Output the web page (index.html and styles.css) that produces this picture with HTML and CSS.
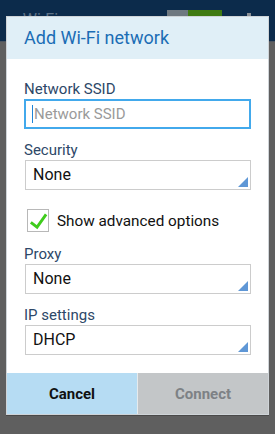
FILE: index.html
```html
<!DOCTYPE html>
<html lang="en">
<head>
  <meta charset="UTF-8" />
  <meta name="viewport" content="width=device-width, initial-scale=1.0"/>
  <title>Add Wi-Fi network</title>
  <link rel="stylesheet" href="styles.css">
</head>
<body>
  <header class="action-bar">
    <span class="bar-title">&lsaquo; Wi-Fi</span>
    <span class="bar-switch"><span class="bar-switch-on"></span></span>
    <span class="bar-menu"></span>
  </header>

  <div class="dialog">
    <h2 class="dialog-title">Add Wi-Fi network</h2>

    <form class="dialog-body">
      <label class="field-label" for="ssid">Network SSID</label>
      <div class="text-field">
        <span class="caret"></span>
        <input type="text" id="ssid" placeholder="Network SSID" />
      </div>

      <label class="field-label">Security</label>
      <div class="spinner">None</div>

      <div class="check-row">
        <span class="checkbox">
          <svg viewBox="0 0 21 22" width="21" height="22">
            <path d="M3 12.5 L9.5 17.5 L19 4" fill="none" stroke="#3fcc1c" stroke-width="3"/>
          </svg>
        </span>
        <span class="check-text">Show advanced options</span>
      </div>

      <label class="field-label">Proxy</label>
      <div class="spinner">None</div>

      <label class="field-label">IP settings</label>
      <div class="spinner">DHCP</div>
    </form>

    <div class="dialog-buttons">
      <button type="button" class="btn btn-cancel">Cancel</button>
      <button type="button" class="btn btn-connect" disabled>Connect</button>
    </div>
  </div>
</body>
</html>
```

FILE: styles.css
```css
body {
  margin: 0;
  background: #5f5f5f;
  font-family: Roboto, 'Noto Sans', sans-serif;
  height: 434px;
  overflow: hidden;
  position: relative;
}

.action-bar {
  height: 42px;
  background: #0c2b4b;
  display: flex;
  align-items: flex-start;
  padding: 10px 14px 0 14px;
  box-sizing: border-box;
  border-bottom: 1px solid #4c5560;
}

.bar-title {
  color: #5d7186;
  font-size: 16px;
  line-height: 16px;
  margin-top: 2px;
  flex: 1;
}

.bar-switch {
  width: 55px;
  height: 8px;
  background: #6e7880;
  margin-right: 25px;
  display: flex;
  justify-content: flex-end;
}

.bar-switch-on {
  width: 34px;
  background: #3f7a12;
}

.bar-menu {
  width: 4px;
  height: 4px;
  background: #8a8f95;
  margin: 3px 10px 0 0;
}

.dialog {
  position: absolute;
  left: 7px;
  top: 17px;
  width: 261px;
  background: #ffffff;
  display: flex;
  flex-direction: column;
  box-shadow: 0 0 0 1px #cfd4d8, 0 1px 0 1px #4a4a4a;
}

.dialog-title {
  margin: 0;
  height: 42px;
  background: #e0eff7;
  color: #1b6db5;
  font-size: 18px;
  font-weight: normal;
  padding-left: 17px;
  line-height: 41px;
}

.dialog-body {
  padding: 22px 17px 18px 17px;
}

.field-label {
  display: block;
  color: #2d4868;
  font-size: 15px;
  line-height: 16px;
  margin-bottom: 2px;
}

.text-field {
  height: 30px;
  border: 2px solid #42a9ec;
  box-sizing: border-box;
  display: flex;
  align-items: center;
  padding-left: 6px;
  margin-bottom: 13px;
}

.caret {
  width: 1px;
  height: 18px;
  background: #1e84d8;
}

.text-field input {
  border: none;
  outline: none;
  padding: 0 0 0 1px;
  font: 15px Roboto, sans-serif;
  width: 190px;
  color: #222;
}

.text-field input::placeholder {
  color: #9a9a9a;
}

.spinner {
  height: 30px;
  border: 1px solid #cccccc;
  box-sizing: border-box;
  margin-left: 1px;
  padding-left: 7px;
  line-height: 28px;
  font-size: 16px;
  color: #111;
  position: relative;
  margin-bottom: 13px;
}

.spinner:last-child {
  margin-bottom: 0;
}

.spinner::after {
  content: "";
  position: absolute;
  right: 2px;
  bottom: 2px;
  border-style: solid;
  border-width: 0 0 10px 10px;
  border-color: transparent transparent #5f97d6 transparent;
}

.check-row {
  display: flex;
  align-items: center;
  margin: 19px 0 14px 3px;
}

.checkbox {
  width: 22px;
  height: 23px;
  border: 1px solid #b8b8b8;
  box-sizing: border-box;
  display: flex;
  align-items: center;
  justify-content: center;
  margin-right: 8px;
}

.check-text {
  font-size: 15.3px;
  color: #111;
}

.dialog-buttons {
  display: flex;
  height: 41px;
  gap: 1px;
  background: #e6eaec;
}

.btn {
  flex: 1;
  border: none;
  font: bold 15px Roboto, sans-serif;
}

.btn-cancel {
  background: #b6dcf3;
  color: #111;
}

.btn-connect {
  background: #c3c6c8;
  color: #7d8185;
}
```
